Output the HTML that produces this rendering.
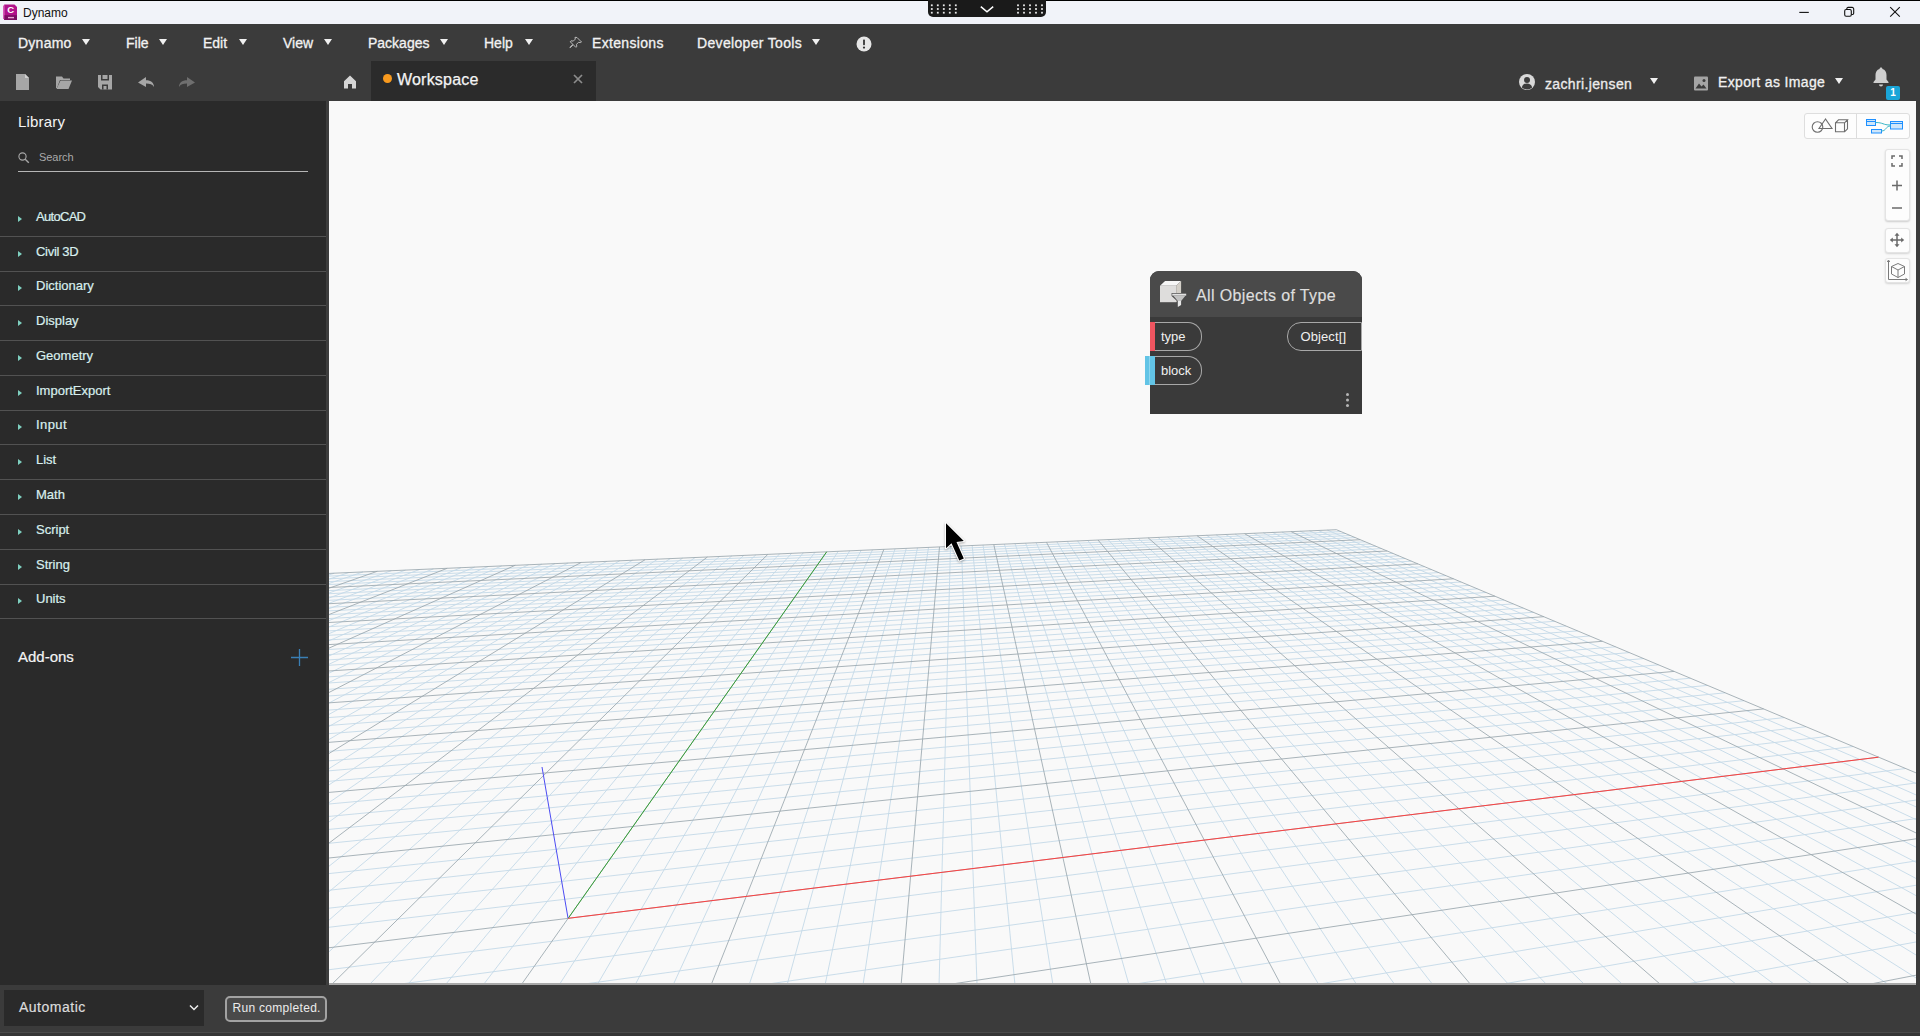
<!DOCTYPE html>
<html><head><meta charset="utf-8"><title>Dynamo</title>
<style>
*{box-sizing:border-box;margin:0;padding:0}
html,body{width:1920px;height:1036px;overflow:hidden;background:#3b3b3b;font-family:"Liberation Sans",sans-serif;}
.abs{position:absolute}
#titlebar{position:absolute;left:0;top:0;width:1920px;height:24px;background:#f1f3f9;border-top:1px solid #000}
#titlebar .ttl{position:absolute;left:23px;top:5px;font-size:12px;color:#111;line-height:15px}
#menubar{position:absolute;left:0;top:24px;width:1920px;height:37px;background:#3b3b3b}
.mi{position:absolute;top:11px;font-size:14px;line-height:16px;color:#f2f2f2;white-space:nowrap;-webkit-text-stroke:0.3px #f2f2f2}
.tri{position:absolute;width:0;height:0;border-left:4px solid transparent;border-right:4px solid transparent;border-top:6px solid #f0f0f0}
#toolbar{position:absolute;left:0;top:61px;width:1920px;height:40px;background:#3b3b3b}
#tab{position:absolute;left:371px;top:0;width:225px;height:40px;background:#2b2b2b}
#sidebar{position:absolute;left:0;top:101px;width:326px;height:884px;background:#2a2a2a}
#split{position:absolute;left:326px;top:101px;width:3px;height:884px;background:#3d3d3d}
#canvas{position:absolute;left:329px;top:101px;width:1587px;height:884px;background:#f9f9f9;overflow:hidden}
#rightedge{position:absolute;left:1916px;top:101px;width:4px;height:884px;background:#3b3b3b}
#bottombar{position:absolute;left:0;top:985px;width:1920px;height:51px;background:#3b3b3b}
.li{position:absolute;left:0;width:326px;height:35px;border-bottom:1px solid #525252}
.li span{position:absolute;left:36px;top:7px;font-size:13px;line-height:16px;color:#d9efee;-webkit-text-stroke:0.2px #d9efee}
.li i{position:absolute;left:18px;top:13.500px;width:0;height:0;border-top:3.400px solid transparent;border-bottom:3.400px solid transparent;border-left:4.600px solid #7fd0c0}
</style></head><body>
<div id="titlebar">
 <svg class="abs" style="left:3px;top:3px" width="15" height="17" viewBox="0 0 15 17"><path d="M1.200 .5h10.300l2.500 2.500v13H1.200z" fill="#b0128b"/><path d="M1.200 11.200H14v4.800H1.200z" fill="#7a0d62"/><path d="M0 1.500h1.200v13.500H0z" fill="#d85ab8"/><text x="7.800" y="9.300" font-size="9.500" font-weight="bold" fill="#fff" text-anchor="middle" font-family="Liberation Sans">C</text><path d="M5 13.600h6" stroke="#e9a6d6" stroke-width="1.400"/></svg>
 <div class="ttl">Dynamo</div>
 <div class="abs" style="left:928px;top:-1px;width:118px;height:17px;background:#1a1a1a;border-radius:0 0 5px 5px"></div>
 <svg class="abs" style="left:928px;top:-1px" width="118" height="17" viewBox="0 0 118 17">
  <g fill="#e8e8e8"><rect x="2.9" y="4.4" width="1.800" height="1.800"/><rect x="2.9" y="8.1" width="1.800" height="1.800"/><rect x="2.9" y="11.8" width="1.800" height="1.800"/><rect x="8.9" y="4.4" width="1.800" height="1.800"/><rect x="8.9" y="8.1" width="1.800" height="1.800"/><rect x="8.9" y="11.8" width="1.800" height="1.800"/><rect x="14.9" y="4.4" width="1.800" height="1.800"/><rect x="14.9" y="8.1" width="1.800" height="1.800"/><rect x="14.9" y="11.8" width="1.800" height="1.800"/><rect x="20.9" y="4.4" width="1.800" height="1.800"/><rect x="20.9" y="8.1" width="1.800" height="1.800"/><rect x="20.9" y="11.8" width="1.800" height="1.800"/><rect x="26.9" y="4.4" width="1.800" height="1.800"/><rect x="26.9" y="8.1" width="1.800" height="1.800"/><rect x="26.9" y="11.8" width="1.800" height="1.800"/><rect x="89.1" y="4.4" width="1.800" height="1.800"/><rect x="89.1" y="8.1" width="1.800" height="1.800"/><rect x="89.1" y="11.8" width="1.800" height="1.800"/><rect x="95.1" y="4.4" width="1.800" height="1.800"/><rect x="95.1" y="8.1" width="1.800" height="1.800"/><rect x="95.1" y="11.8" width="1.800" height="1.800"/><rect x="101.1" y="4.4" width="1.800" height="1.800"/><rect x="101.1" y="8.1" width="1.800" height="1.800"/><rect x="101.1" y="11.8" width="1.800" height="1.800"/><rect x="107.1" y="4.4" width="1.800" height="1.800"/><rect x="107.1" y="8.1" width="1.800" height="1.800"/><rect x="107.1" y="11.8" width="1.800" height="1.800"/><rect x="113.1" y="4.4" width="1.800" height="1.800"/><rect x="113.1" y="8.1" width="1.800" height="1.800"/><rect x="113.1" y="11.8" width="1.800" height="1.800"/></g>
  <path d="M52.800 6.600l6.200 5.200l6.200-5.200" stroke="#fff" stroke-width="1.500" fill="none"/>
 </svg>
 <svg class="abs" style="left:1790px;top:0" width="130" height="23" viewBox="0 0 130 23">
  <path d="M9.300 11.400h9.500" stroke="#111" stroke-width="1.100"/>
  <rect x="54.700" y="8.500" width="6.600" height="6.700" rx="1.400" fill="none" stroke="#111" stroke-width="1.100"/><path d="M56.800 8.500v-.8a1.300 1.300 0 0 1 1.300-1.300h4a1.600 1.600 0 0 1 1.600 1.600v4.300a1.200 1.200 0 0 1-1.200 1.200h-1.200" fill="none" stroke="#111" stroke-width="1.100"/>
  <path d="M100.200 6.200l9.600 9.400M109.800 6.200l-9.600 9.400" stroke="#111" stroke-width="1.100"/>
 </svg>
</div>
<div id="menubar">
 <div class="mi" style="left:18px;letter-spacing:.25px">Dynamo</div><div class="tri" style="left:82px;top:15px"></div>
 <div class="mi" style="left:126px">File</div><div class="tri" style="left:159px;top:15px"></div>
 <div class="mi" style="left:203px">Edit</div><div class="tri" style="left:239px;top:15px"></div>
 <div class="mi" style="left:283px">View</div><div class="tri" style="left:324px;top:15px"></div>
 <div class="mi" style="left:368px">Packages</div><div class="tri" style="left:440px;top:15px"></div>
 <div class="mi" style="left:484px">Help</div><div class="tri" style="left:525px;top:15px"></div>
 <svg class="abs" style="left:569px;top:12px" width="14" height="14" viewBox="0 0 14 14"><path d="M8 1.5l4.5 4.5-1.2.6-1.8-.3-2 2 .3 2.2-1 .8-2.6-2.6-3 3.1-.4-.4 3.1-3-2.6-2.6.8-1 2.2.3 2-2-.3-1.8z" fill="none" stroke="#bbb" stroke-width="1"/></svg>
 <div class="mi" style="left:592px;letter-spacing:.33px">Extensions</div>
 <div class="mi" style="left:697px;letter-spacing:.33px">Developer Tools</div><div class="tri" style="left:812px;top:15px"></div>
 <svg class="abs" style="left:856px;top:12px" width="16" height="16" viewBox="0 0 16 16"><circle cx="8" cy="8" r="7.5" fill="#e6e6e6"/><rect x="7.1" y="3.6" width="1.8" height="5.6" rx=".6" fill="#333"/><circle cx="8" cy="11.6" r="1.1" fill="#333"/></svg>
</div>
<div id="toolbar">
 <svg class="abs" style="left:0;top:0" width="340" height="40" viewBox="0 0 340 40">
  <g fill="#a6a6a6">
   <path d="M16 13h9l4 4v12H16z"/><path d="M25 13l4 4h-4z" fill="#d0d0d0"/>
   <path d="M56 15.5h6l1.5 2H70v1.5H60l-3 8h-1z"/><path d="M60.5 19.5H72l-3.5 8.5H56.5z"/>
   <path d="M98 14h14v14.5h-11.5L98 26z"/><path d="M101 14v5.5h8V14zM102.5 14v4h5v-4z" fill-rule="evenodd" fill="#3b3b3b"/><path d="M102 28.5v-5h6v5zM103.5 28.5v-3.5h3v3.5z" fill-rule="evenodd" fill="#3b3b3b"/>
   <path d="M138 21.400l8-5.5v3.3c5 0 8 2.500 8 6.700c-1.500-2.500-4-3.300-8-3.300v3.300z"/>
   <path d="M195 21.400l-8-5.500v3.300c-5 0-8 2.500-8 6.700c1.500-2.500 4-3.300 8-3.300v3.300z" fill="#6f6f6f"/>
  </g>
  <path d="M349 14.500l7.500 7v7.500h-4.800v-5h-5.400v5h-4.800v-7.500z" fill="#e0e0e0" transform="translate(0,0)"/>
 </svg>
 <svg class="abs" style="left:342px;top:13px" width="16" height="16" viewBox="0 0 16 16"><path d="M8 1.500l6 5.700v7.300h-4v-4.500h-4v4.500H2V7.200z" fill="#d6d6d6"/></svg>
 <div id="tab">
  <div class="abs" style="left:12px;top:12.800px;width:9px;height:9px;border-radius:50%;background:#f89a1e"></div>
  <div class="abs" style="left:26px;top:9px;font-size:16px;line-height:20px;color:#f4f4f4;letter-spacing:.2px;-webkit-text-stroke:0.25px #f4f4f4">Workspace</div>
  <svg class="abs" style="left:201px;top:12px" width="12" height="12" viewBox="0 0 12 12"><path d="M2 2l8 8M10 2l-8 8" stroke="#8c8c8c" stroke-width="1.700"/></svg>
 </div>
 <svg class="abs" style="left:1518px;top:12px" width="18" height="18" viewBox="0 0 18 18"><circle cx="9" cy="9" r="8" fill="#d8d8d8"/><circle cx="9" cy="7" r="3" fill="#3b3b3b"/><path d="M3.800 14.500c.8-3 2.700-4 5.200-4s4.400 1 5.200 4a8 8 0 0 1-10.400 0z" fill="#3b3b3b"/></svg>
 <div class="mi" style="left:1545px;top:15px;color:#e8e8e8;letter-spacing:.36px">zachri.jensen</div><div class="tri" style="left:1650px;top:17px"></div>
 <svg class="abs" style="left:1694px;top:15px" width="14" height="15" viewBox="0.500 0 14 15"><rect x=".5" y=".5" width="14" height="14" rx="1" fill="#a4a4a4"/><path d="M2 12.500l3.500-5 2.500 3 2-2 3 4z" fill="#3b3b3b"/><circle cx="10.500" cy="4.500" r="1.500" fill="#3b3b3b"/></svg>
 <div class="mi" style="left:1718px;top:13px;color:#f0f0f0;letter-spacing:.35px">Export as Image</div><div class="tri" style="left:1835px;top:17px"></div>
 <svg class="abs" style="left:1870px;top:5px" width="22" height="22" viewBox="0 0 22 22"><path d="M11 1.500c.9 0 1.400.6 1.400 1.400c2.800.8 4.100 3 4.100 6v4.600l2 2.500v1H3.500v-1l2-2.500V8.900c0-3 1.300-5.200 4.100-6c0-.8.500-1.400 1.400-1.400z" fill="#cfcfcf"/><path d="M9 18.500h4a2 2 0 0 1-4 0z" fill="#cfcfcf"/></svg>
 <div class="abs" style="left:1886px;top:25px;width:14px;height:14px;background:#1aa5d8;border-radius:2px;color:#fff;font-size:10px;font-weight:bold;line-height:14px;text-align:center">1</div>
</div>
<div id="sidebar">
 <div class="abs" style="left:18px;top:11px;font-size:15px;line-height:20px;color:#f4f4f4;letter-spacing:.2px">Library</div>
 <svg class="abs" style="left:17px;top:49.700px" width="14" height="14" viewBox="0 0 14 14"><circle cx="5.500" cy="5.500" r="3.600" fill="none" stroke="#a8a8a8" stroke-width="1.100"/><path d="M8.200 8.200l3.600 3.600" stroke="#a8a8a8" stroke-width="1.400"/></svg>
 <div class="abs" style="left:39px;top:48.500px;font-size:11px;line-height:15px;color:#a9a9a9;letter-spacing:-.05px">Search</div>
 <div class="abs" style="left:18px;top:70px;width:290px;height:1px;background:#b6b6b6"></div>
 <div class="li" style="top:101px"><i></i><span style="letter-spacing:-0.7px">AutoCAD</span></div>
<div class="li" style="top:136px"><i></i><span style="letter-spacing:-0.3px">Civil 3D</span></div>
<div class="li" style="top:170px"><i></i><span style="letter-spacing:0px">Dictionary</span></div>
<div class="li" style="top:205px"><i></i><span style="letter-spacing:0px">Display</span></div>
<div class="li" style="top:240px"><i></i><span style="letter-spacing:0px">Geometry</span></div>
<div class="li" style="top:275px"><i></i><span style="letter-spacing:0px">ImportExport</span></div>
<div class="li" style="top:309px"><i></i><span style="letter-spacing:0.4px">Input</span></div>
<div class="li" style="top:344px"><i></i><span style="letter-spacing:0px">List</span></div>
<div class="li" style="top:379px"><i></i><span style="letter-spacing:0px">Math</span></div>
<div class="li" style="top:414px"><i></i><span style="letter-spacing:0px">Script</span></div>
<div class="li" style="top:449px"><i></i><span style="letter-spacing:0px">String</span></div>
<div class="li" style="top:483px"><i></i><span style="letter-spacing:0px">Units</span></div>

 <div class="abs" style="left:18px;top:546px;font-size:15px;line-height:20px;color:#f4f4f4;-webkit-text-stroke:0.2px #f4f4f4">Add-ons</div>
 <svg class="abs" style="left:290px;top:547px" width="19" height="19" viewBox="0 0 19 19"><path d="M9.500 1v17M1 9.500h17" stroke="#3a7fb5" stroke-width="1.300"/></svg>
</div>
<div id="split"></div>
<div id="canvas">
 <svg class="abs" style="left:0;top:0" width="1587" height="884" viewBox="0 0 1587 884">
  <path d="M-2.0 474.6L5.2 472.2M-2.0 478.8L19.7 471.6M-2.0 483.2L34.0 470.9M-2.0 492.7L62.4 469.7M-2.0 497.7L76.5 469.1M-2.0 503.0L90.5 468.5M-2.0 508.5L104.4 467.9M-2.0 520.4L132.0 466.7M-2.0 526.8L145.7 466.1M-2.0 533.5L159.2 465.5M-2.0 540.6L172.7 464.9M-2.0 555.9L199.5 463.8M-2.0 564.2L212.8 463.2M-2.0 573.1L226.0 462.6M-2.0 582.5L239.1 462.0M-2.0 603.1L265.1 460.9M-2.0 614.5L277.9 460.3M-2.0 626.6L290.7 459.8M-2.0 639.7L303.5 459.2M-2.0 668.9L328.7 458.1M-2.0 685.2L341.2 457.6M-2.0 703.0L353.7 457.1M-2.0 722.4L366.1 456.5M-2.0 766.8L390.6 455.5M1341.5 886.0L1589.0 840.6M-2.0 792.4L402.8 454.9M1156.9 886.0L1589.0 810.8M-2.0 820.9L414.8 454.4M972.3 886.0L1589.0 783.9M-2.0 852.6L426.9 453.9M787.7 886.0L1589.0 759.6M38.2 886.0L450.7 452.8M418.5 886.0L1589.0 717.3M76.4 886.0L462.6 452.3M234.0 886.0L1589.0 698.8M114.5 886.0L474.3 451.8M49.4 886.0L1589.0 681.7M152.6 886.0L486.0 451.3M-2.0 869.0L1576.6 667.5M228.8 886.0L509.2 450.3M-2.0 826.5L1524.0 645.5M266.9 886.0L520.7 449.8M-2.0 807.4L1499.9 635.3M305.0 886.0L532.2 449.3M-2.0 789.5L1477.0 625.7M343.2 886.0L543.5 448.8M-2.0 772.8L1455.2 616.6M419.4 886.0L566.1 447.8M-2.0 742.5L1415.0 599.7M457.5 886.0L577.3 447.3M-2.0 728.6L1396.3 591.8M495.6 886.0L588.5 446.9M-2.0 715.6L1378.4 584.4M533.7 886.0L599.5 446.4M-2.0 703.2L1361.4 577.2M610.0 886.0L621.5 445.4M-2.0 680.5L1329.5 563.8M648.1 886.0L632.4 445.0M-2.0 670.0L1314.6 557.6M686.2 886.0L643.2 444.5M-2.0 660.0L1300.3 551.6M724.3 886.0L654.0 444.0M-2.0 650.5L1286.6 545.8M800.6 886.0L675.4 443.1M-2.0 632.8L1260.8 535.0M838.7 886.0L686.0 442.6M-2.0 624.6L1248.6 529.9M876.8 886.0L696.6 442.2M-2.0 616.7L1236.9 525.0M915.0 886.0L707.1 441.7M-2.0 609.2L1225.6 520.3M991.2 886.0L727.9 440.8M-2.0 595.1L1204.3 511.3M1029.3 886.0L738.3 440.4M-2.0 588.4L1194.2 507.0M1067.5 886.0L748.6 439.9M-2.0 582.1L1184.4 502.9M1105.6 886.0L758.8 439.5M-2.0 576.0L1175.0 499.0M1181.9 886.0L779.1 438.6M-2.0 564.4L1157.0 491.5M1220.0 886.0L789.2 438.1M-2.0 559.0L1148.5 487.9M1258.1 886.0L799.2 437.7M-2.0 553.7L1140.2 484.4M1296.3 886.0L809.2 437.3M-2.0 548.6L1132.2 481.0M1372.5 886.0L829.0 436.4M-2.0 539.0L1116.9 474.6M1410.7 886.0L838.8 436.0M-2.0 534.4L1109.6 471.6M1448.8 886.0L848.6 435.6M-2.0 530.0L1102.5 468.6M1486.9 886.0L858.3 435.1M-2.0 525.8L1095.6 465.7M1563.2 886.0L877.6 434.3M-2.0 517.6L1082.4 460.2M1589.0 878.2L887.2 433.9M-2.0 513.8L1076.1 457.5M1589.0 855.2L896.7 433.5M-2.0 510.0L1070.0 454.9M1589.0 834.0L906.2 433.1M-2.0 506.4L1064.0 452.4M1589.0 795.7L925.0 432.3M-2.0 499.4L1052.5 447.6M1589.0 778.5L934.3 431.8M-2.0 496.1L1047.0 445.3M1589.0 762.3L943.6 431.4M-2.0 492.8L1041.6 443.0M1589.0 747.2L952.9 431.0M-2.0 489.7L1036.3 440.8M1589.0 719.5L971.2 430.2M-2.0 483.6L1026.2 436.6M1589.0 706.8L980.4 429.8M-2.0 480.7L1021.4 434.5M1589.0 694.8L989.4 429.5M-2.0 477.9L1016.6 432.5M1589.0 683.5L998.4 429.1M-2.0 475.2L1012.0 430.6" stroke="#c4d9e8" stroke-width="0.9" fill="none"/>
  <path d="M-2.0 487.9L48.3 470.3M-2.0 514.3L118.2 467.3M-2.0 548.0L186.2 464.3M-2.0 592.5L252.1 461.5M-2.0 653.7L316.1 458.7M-2.0 743.6L378.4 456.0M1526.2 886.0L1589.0 873.8M0.1 886.0L438.8 453.4M603.1 886.0L1589.0 737.5M190.7 886.0L497.7 450.8M-2.0 847.0L1549.5 656.2M381.3 886.0L554.9 448.3M-2.0 757.2L1434.6 607.9M571.9 886.0L610.5 445.9M-2.0 691.6L1345.1 570.4M762.5 886.0L664.8 443.6M-2.0 641.5L1273.4 540.3M953.1 886.0L717.5 441.3M-2.0 602.0L1214.8 515.7M1143.7 886.0L769.0 439.0M-2.0 570.1L1165.9 495.2M1334.4 886.0L819.1 436.8M-2.0 543.7L1124.5 477.8M1525.1 886.0L868.0 434.7M-2.0 521.6L1088.9 462.9M1589.0 814.2L915.6 432.7M-2.0 502.8L1058.2 450.0M1589.0 732.9L962.1 430.6M-2.0 486.6L1031.2 438.7M1589.0 672.7L1007.4 428.7M-2.0 472.5L1007.4 428.7" stroke="#99a6ad" stroke-width="0.85" fill="none"/>
  <path d="M239.2 817.3L497.7 450.8" stroke="#2f9e2f" stroke-width="0.95" fill="none"/>
  <path d="M239.2 817.3L1549.5 656.2" stroke="#ff3a3a" stroke-width="0.95" fill="none"/>
  <path d="M239 817L213 666" stroke="#4242f2" stroke-width="0.95" fill="none"/>
 </svg>
 <div class="abs" style="left:0;bottom:0;width:1587px;height:2px;background:#a8a8a8"></div>
 <!-- node -->
 <div class="abs" style="left:821px;top:170px;width:212px;height:143px;background:#3a3a3a;border-radius:9px 9px 0 0">
  <div class="abs" style="left:0;top:0;width:212px;height:46px;background:#4a4a4a;border-radius:9px 9px 0 0"></div>
  <svg class="abs" style="left:9px;top:9px" width="29" height="29" viewBox="0 0 29 29"><path d="M1 5.800L6.100 .9H22.100L17.200 5.800z" fill="#f6f6f6"/><path d="M1 5.800H17.200V22.200H1z" fill="#dedddc"/><path d="M17.200 5.800L22.100 .9V17.300L17.200 22.200z" fill="#d3cfc8"/><path d="M12.600 13h15.200v3l-5.200 5.300v4.300l-4.300 2.700v-7l-5.700-5.300z" fill="#4a4a4a"/><path d="M13.200 13.700h14v1.900h-14z" fill="#e2e2e2"/><path d="M14.100 15.600h12.500l-4.500 5.300h-3.300z" fill="#c2c2c2"/><path d="M18.800 20.900h3.300v4l-3.300 2.200z" fill="#e6e6e6"/></svg>
  <div class="abs" style="left:46px;top:15px;font-size:16px;line-height:20px;color:#dedede;white-space:nowrap;letter-spacing:.36px;-webkit-text-stroke:0.2px #dedede">All Objects of Type</div>
  <div class="abs" style="left:0;top:51px;width:52px;height:29px;border:1px solid #a8a8a8;border-left:none;border-radius:0 14px 14px 0"></div>
  <div class="abs" style="left:0;top:51px;width:5px;height:29px;background:#ef5560"></div>
  <div class="abs" style="left:11px;top:58px;font-size:13px;line-height:16px;color:#f0f0f0">type</div>
  <div class="abs" style="left:0;top:85px;width:52px;height:29px;border:1px solid #a8a8a8;border-left:none;border-radius:0 14px 14px 0"></div>
  <div class="abs" style="left:-5px;top:85px;width:10px;height:29px;background:#62c4e6"></div>
  <div class="abs" style="left:-1px;top:85px;width:1px;height:29px;background:#8fd6ee"></div>
  <div class="abs" style="left:11px;top:92px;font-size:13px;line-height:16px;color:#f0f0f0">block</div>
  <div class="abs" style="left:137px;top:51px;width:75px;height:29px;border:1px solid #a8a8a8;border-radius:14px 0 0 14px"></div>
  <div class="abs" style="left:150.500px;top:58px;letter-spacing:.1px;font-size:13px;line-height:16px;color:#f0f0f0">Object[]</div>
  <div class="abs" style="left:196px;top:122px;width:3px;height:3px;border-radius:50%;background:#b5b5b5;box-shadow:0 5.500px 0 #b5b5b5,0 11px 0 #b5b5b5"></div>
 </div>
 <!-- view toggles -->
 <div class="abs" style="left:1474.500px;top:12.300px;width:106px;height:25.500px;background:#fdfdfd;border:1px solid #dedede;border-radius:3px"></div>
 <div class="abs" style="left:1527px;top:13px;width:1px;height:24px;background:#dcdcdc"></div>
 <svg class="abs" style="left:1480px;top:14px" width="44" height="22" viewBox="0 0 44 22"><g fill="none" stroke="#6e6e6e" stroke-width="1.100"><circle cx="8.500" cy="12" r="5.300"/><path d="M16.500 4l-6.500 9.500h13z"/><path d="M26.500 7.800h9v9h-9zM26.500 7.800l3-3h9l-3 3M38.500 4.800v9l-3 3"/></g></svg>
 <svg class="abs" style="left:1534px;top:14px" width="44" height="20" viewBox="0 0 44 20"><g fill="#cfe6fa" stroke="#1e90ff" stroke-width="1"><rect x="3.500" y="4.500" width="9" height="6"/><rect x="8.500" y="14.500" width="10" height="3.500"/><rect x="27.500" y="6.500" width="12" height="7.500"/></g><path d="M3.500 6.500h9M27.500 8.500h12" stroke="#1e90ff"/><path d="M12.500 7.500c8 0 7 2.500 15 2.500M18.500 16c5 0 4-5 9-5" stroke="#38b6c8" fill="none"/></svg>
 <!-- zoom controls -->
 <div class="abs" style="left:1555.500px;top:47.500px;width:25px;height:72px;background:#fdfdfd;border:1px solid #e4e4e4;border-radius:3px;box-shadow:0 1px 2px rgba(0,0,0,.18)"></div>
 <svg class="abs" style="left:1556px;top:47.700px" width="24" height="71" viewBox="0 0 24 71"><g fill="none" stroke="#6a6a6a" stroke-width="1.500"><path d="M7 10V7h3M14 7h3v3M17 14v3h-3M10 17H7v-3"/><path d="M12 31.500v10M7 36.500h10"/><path d="M7 59h10"/></g></svg>
 <div class="abs" style="left:1555.500px;top:126.500px;width:25px;height:25px;background:#fdfdfd;border:1px solid #e4e4e4;border-radius:3px;box-shadow:0 1px 2px rgba(0,0,0,.15)"></div>
 <svg class="abs" style="left:1556px;top:127px" width="24" height="24" viewBox="0 0 24 24"><path d="M12 6.500v11M6.500 12h11" stroke="#6a6a6a" stroke-width="1.500"/><path d="M12 4.800l2.500 3H9.500zM12 19.200l2.500-3H9.500zM4.800 12l3-2.500v5zM19.200 12l-3-2.500v5z" fill="#6a6a6a"/></svg>
 <div class="abs" style="left:1555.500px;top:156.500px;width:25px;height:25px;background:#fdfdfd;border:1px solid #e4e4e4;border-radius:3px;box-shadow:0 1px 2px rgba(0,0,0,.15)"></div>
 <svg class="abs" style="left:1556px;top:157px" width="24" height="24" viewBox="0 0 24 24"><g fill="none" stroke="#7a7a7a" stroke-width="1"><path d="M3.500 3v18.500H22"/><path d="M3.500 2l-1.200 2M3.500 2l1.200 2M22.500 21.500l-2-1.200M22.500 21.500l-2 1.200"/><path d="M13 5.500l6.500 3v7.500l-6.500 3.500-6.500-3.500V8.500zM6.500 8.500l6.500 3.500 6.500-3.500M13 12v7.500"/></g></svg>
 <!-- cursor -->
 <svg class="abs" style="left:613px;top:418px" width="30" height="48" viewBox="0 0 30 48"><path transform="translate(4,4.2)" d="M0 0V25L5.500 20L13.300 37.200L17.800 35.200L10.500 18.700L17.800 17.800Z" fill="#000" stroke="#fff" stroke-width="2.200" stroke-linejoin="round" paint-order="stroke" style="filter:drop-shadow(.5px 1px 1px rgba(0,0,0,.3))"/></svg>
</div>
<div id="rightedge"></div>
<div id="bottombar">
 <div class="abs" style="left:4px;top:5px;width:200px;height:36px;background:#2a2a2a"></div>
 <div class="abs" style="left:19px;top:14px;font-size:14px;line-height:16px;color:#dcdcdc;-webkit-text-stroke:0.2px #dcdcdc;letter-spacing:.5px">Automatic</div>
 <svg class="abs" style="left:188px;top:19px" width="12" height="8" viewBox="0 0 12 8"><path d="M2 1.500l4 4 4-4" stroke="#eee" stroke-width="1.500" fill="none"/></svg>
 <div class="abs" style="left:225px;top:11px;width:102px;height:26px;border:2px solid #a2a2a2;border-radius:5px;background:#4a4a4a"></div>
 <div class="abs" style="left:232.500px;top:16px;font-size:12px;line-height:15px;color:#ececec;white-space:nowrap;letter-spacing:.3px">Run completed.</div>
 <div class="abs" style="left:0;top:47px;width:1920px;height:4px;background:#353535;border-top:1px solid #4a4a4a"></div>
</div>
</body></html>
